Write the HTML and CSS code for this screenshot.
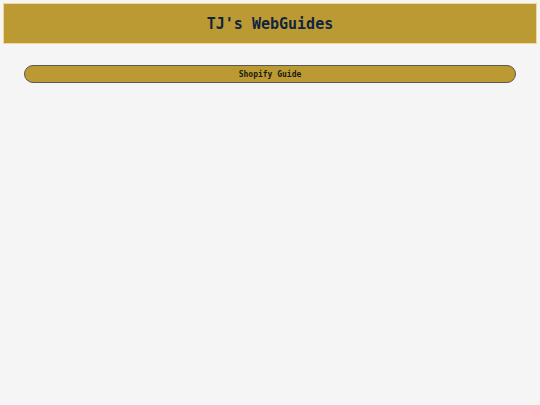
FILE: index.html
```html
<!DOCTYPE html>
<html>
<head>
<meta charset="utf-8">
<link rel="stylesheet" href="styles.css">
</head>
<body>
<header class="site-header">
  <h1 class="site-title">TJ's WebGuides</h1>
</header>
<nav class="guide-list">
  <a class="guide-button" href="#">Shopify Guide</a>
</nav>
</body>
</html>
```
FILE: styles.css
```css
html, body {
  margin: 0;
  padding: 0;
  background: #f5f5f5;
}
body {
  padding: 3px;
  font-family: "DejaVu Sans Mono", monospace;
}
.site-header {
  background: #bc9a33;
  border: 1px solid #f0d89a;
  height: 39px;
  display: flex;
  align-items: center;
  justify-content: center;
}
.site-title {
  margin: 0;
  padding-top: 1px;
  font-size: 15px;
  font-weight: bold;
  color: #0f2440;
}
.guide-list {
  padding: 21px 21px 0 21px;
  display: flex;
  flex-direction: column;
}
.guide-button {
  display: block;
  height: 16px;
  line-height: 17px;
  background: #bc9a33;
  border: 1px solid #5a5a50;
  border-radius: 9px;
  text-align: center;
  font-size: 8px;
  font-weight: bold;
  color: #1a1a10;
  text-decoration: none;
}
```
